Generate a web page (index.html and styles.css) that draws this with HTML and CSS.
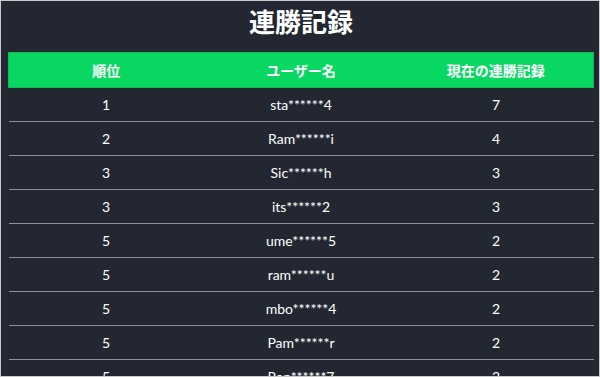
FILE: index.html
```html
<!DOCTYPE html>
<html lang="ja">
<head>
<meta charset="utf-8">
<link rel="stylesheet" href="styles.css">
</head>
<body>
<div class="frame">
  <h1 class="title">連勝記録</h1>
  <table class="ranking">
    <thead>
      <tr><th>順位</th><th>ユーザー名</th><th>現在の連勝記録</th></tr>
    </thead>
    <tbody>
      <tr><td>1</td><td>sta******4</td><td>7</td></tr>
      <tr><td>2</td><td>Ram******i</td><td>4</td></tr>
      <tr><td>3</td><td>Sic******h</td><td>3</td></tr>
      <tr><td>3</td><td>its******2</td><td>3</td></tr>
      <tr><td>5</td><td>ume******5</td><td>2</td></tr>
      <tr><td>5</td><td>ram******u</td><td>2</td></tr>
      <tr><td>5</td><td>mbo******4</td><td>2</td></tr>
      <tr><td>5</td><td>Pam******r</td><td>2</td></tr>
      <tr><td>5</td><td>Ran******7</td><td>2</td></tr>
    </tbody>
  </table>
</div>
</body>
</html>
```

FILE: styles.css
```css
html, body {
  margin: 0;
  padding: 0;
  height: 100%;
  overflow: hidden;
}
body {
  background: #ffffff;
}
.frame {
  box-sizing: border-box;
  height: 377px;
  border: 1px solid #c9c9c9;
  background: #222731;
  padding: 0 5px 0 7px;
  overflow: hidden;
  font-family: "Lato", "Noto Sans CJK JP", sans-serif;
  color: #ffffff;
}
.title {
  margin: 0;
  height: 51px;
  box-sizing: border-box;
  padding-top: 2px;
  text-align: center;
  font-family: "Noto Sans CJK JP", sans-serif;
  font-size: 26px;
  font-weight: 700;
  line-height: 36px;
}
.ranking {
  width: 100%;
  border-collapse: collapse;
  table-layout: fixed;
}
.ranking th {
  background: #08d862;
  height: 34px;
  padding: 0;
  font-family: "Noto Sans CJK JP", sans-serif;
  font-size: 14px;
  font-weight: 700;
  color: #ffffff;
  text-align: center;
  border-top: 1px solid #14b85a;
  border-bottom: 1px solid #14b85a;
}
.ranking th:first-child { border-left: 1px solid #14b85a; }
.ranking th:last-child { border-right: 1px solid #14b85a; }
.ranking td {
  height: 33px;
  padding: 0;
  text-align: center;
  font-size: 14px;
  border-bottom: 1px solid #8e9196;
}
```
